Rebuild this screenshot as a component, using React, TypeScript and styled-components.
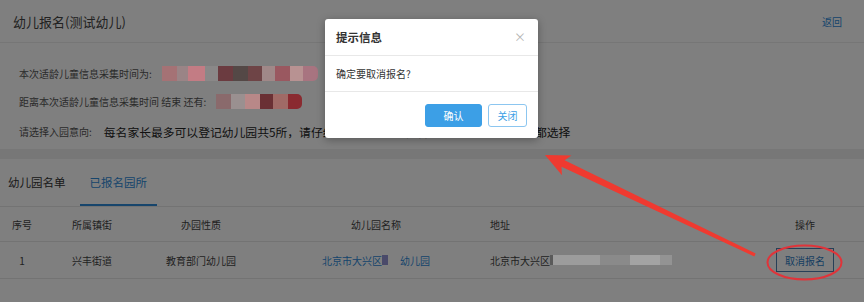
import React from "react";
import styled, { createGlobalStyle } from "styled-components";

const GlobalStyle = createGlobalStyle`
  html, body { margin: 0; padding: 0; background: #fff; }
  body { font-family: "Noto Sans CJK SC", "Noto Sans", sans-serif; color: #333; }
  * { box-sizing: border-box; }
`;

const Page = styled.div`
  position: relative;
  width: 864px;
  height: 302px;
  overflow: hidden;
  background: #fff;
`;

const Header = styled.div`
  height: 43px;
  padding: 0 22px 0 13px;
  display: flex;
  align-items: center;
  justify-content: space-between;
  border-bottom: 1px solid #ececec;
`;

const Title = styled.div`
  font-size: 13px;
  color: #444;
`;

const BackLink = styled.a`
  font-size: 10px;
  color: #2e8ad8;
  text-decoration: none;
`;

const Info = styled.div`
  padding: 22px 19px 8px;
  display: flex;
  flex-direction: column;
  gap: 12px;
`;

const InfoRow = styled.div<{ $tall?: boolean }>`
  height: ${(p) => (p.$tall ? 20 : 16)}px;
  display: flex;
  align-items: center;
  white-space: nowrap;
`;

const Label = styled.span`
  font-size: 10px;
  color: #555;
  margin-right: 10px;
`;

const BigText = styled.span`
  font-size: 11.8px;
  color: #222;
  margin-left: 2px;
`;

const Mosaic = styled.span`
  position: relative;
  z-index: 3;
  display: flex;
  height: 15px;
`;

const Tile = styled.span<{ $w: number; $c: string; $round?: boolean }>`
  width: ${(p) => p.$w}px;
  height: 100%;
  background: ${(p) => p.$c};
  border-radius: ${(p) => (p.$round ? "0 5px 5px 0" : "0")};
`;

const Band = styled.div`
  height: 10px;
  background: #efefef;
`;

const TabBar = styled.div`
  height: 48px;
  display: flex;
  border-bottom: 1px solid #e6e6e6;
`;

const Tab = styled.div<{ $active?: boolean; $first?: boolean }>`
  height: 100%;
  display: flex;
  align-items: center;
  padding: ${(p) => (p.$first ? "0 14px 0 8px" : "0 10px")};
  font-size: 11.5px;
  color: ${(p) => (p.$active ? "#2e8ad8" : "#333")};
  border-bottom: 2px solid ${(p) => (p.$active ? "#2e8ad8" : "transparent")};
`;

const TableRow = styled.div<{ $h: number }>`
  display: grid;
  grid-template-columns: 44px 96px 122px 228px 250px 124px;
  height: ${(p) => p.$h}px;
  align-items: center;
  border-bottom: 1px solid #e6e6e6;
  font-size: 10px;
  color: #444;
`;

const Cell = styled.div<{ $align?: "left" | "center"; $pl?: number }>`
  display: flex;
  align-items: center;
  justify-content: ${(p) => (p.$align === "left" ? "flex-start" : "center")};
  padding-left: ${(p) => p.$pl ?? 0}px;
  white-space: nowrap;
`;

const NameLink = styled.span`
  color: #2e8ad8;
  display: flex;
  align-items: center;
`;

const NameBlot = styled.span`
  position: relative;
  z-index: 3;
  width: 6px;
  height: 10px;
  background: #4a4a6a;
  margin-right: 12px;
`;

const AddrMosaic = styled.span`
  position: relative;
  z-index: 3;
  display: flex;
  height: 10px;
`;

const CancelBtn = styled.button`
  width: 58px;
  height: 24px;
  border: 1px solid #4f7fae;
  background: transparent;
  color: #2e7cc4;
  font-family: inherit;
  font-size: 10px;
  padding: 0;
`;

const Mask = styled.div`
  position: absolute;
  inset: 0;
  background: rgba(0, 0, 0, 0.5);
  z-index: 2;
`;

const Modal = styled.div`
  position: absolute;
  left: 325px;
  top: 19px;
  width: 213px;
  height: 119px;
  background: #fff;
  border-radius: 3px;
  z-index: 4;
  display: flex;
  flex-direction: column;
  box-shadow: 0 2px 8px rgba(0, 0, 0, 0.3);
`;

const ModalHead = styled.div`
  height: 37px;
  padding: 0 12px 0 11px;
  display: flex;
  align-items: center;
  justify-content: space-between;
  border-bottom: 1px solid #e8e8e8;
`;

const ModalTitle = styled.div`
  font-size: 11.5px;
  font-weight: 700;
  color: #333;
`;

const CloseX = styled.span`
  font-size: 12px;
  color: #b5b5b5;
  line-height: 1;
`;

const ModalBody = styled.div`
  height: 36px;
  padding: 0 11px;
  display: flex;
  align-items: center;
  border-bottom: 1px solid #e8e8e8;
  font-size: 10px;
  color: #333;
`;

const ModalFoot = styled.div`
  flex: 1;
  display: flex;
  align-items: center;
  justify-content: flex-end;
  gap: 6px;
  padding-right: 11px;
`;

const Btn = styled.button<{ $primary?: boolean; $w: number }>`
  width: ${(p) => p.$w}px;
  height: 23px;
  border-radius: 3px;
  font-family: inherit;
  font-size: 10px;
  padding: 0;
  border: 1px solid ${(p) => (p.$primary ? "#3c9fe6" : "#8cc6f0")};
  background: ${(p) => (p.$primary ? "#3c9fe6" : "#fff")};
  color: ${(p) => (p.$primary ? "#fff" : "#3c9fe6")};
`;

const Annotation = styled.svg`
  position: absolute;
  left: 0;
  top: 0;
  z-index: 5;
  pointer-events: none;
`;

const row1 = [
  [15, "#a57275"], [11, "#9a8486"], [17, "#c37c84"], [13, "#8a8888"],
  [15, "#6b3b40"], [15, "#544846"], [14, "#6e4446"], [13, "#a08888"],
  [15, "#9a5860"], [13, "#b89292"], [15, "#a87480"],
] as const;

const row2 = [
  [15, "#8a6a6c"], [14, "#9a9090"], [15, "#b88888"], [13, "#6a3034"],
  [15, "#a06a66"], [14, "#8a2a30"],
] as const;

const addr = [
  [3, "#5a5a5a"], [47, "#9c9c9c"], [30, "#8a8a8a"], [30, "#a3a3a3"], [12, "#939393"],
] as const;

function arrowPoints() {
  const tip = [545, 155];
  const tail = [755, 255];
  const dx = tail[0] - tip[0];
  const dy = tail[1] - tip[1];
  const len = Math.hypot(dx, dy);
  const u = [dx / len, dy / len];
  const n = [-u[1], u[0]];
  const hl = 24;
  const hw = 11;
  const base = [tip[0] + u[0] * hl, tip[1] + u[1] * hl];
  const notch = [tip[0] + u[0] * (hl - 4), tip[1] + u[1] * (hl - 4)];
  const p = (c: number[], k: number) => `${c[0] + n[0] * k},${c[1] + n[1] * k}`;
  return [
    `${tip[0]},${tip[1]}`,
    p(base, hw),
    p(notch, 3.6),
    p(tail, 1.6),
    p(tail, -1.6),
    p(notch, -3.6),
    p(base, -hw),
  ].join(" ");
}

export default function App() {
  return (
    <>
      <GlobalStyle />
      <Page>
        <Header>
          <Title>幼儿报名(测试幼儿)</Title>
          <BackLink>返回</BackLink>
        </Header>
        <Info>
          <InfoRow>
            <Label>本次适龄儿童信息采集时间为:</Label>
            <Mosaic>
              {row1.map(([w, c], i) => (
                <Tile key={i} $w={w} $c={c} $round={i === row1.length - 1} />
              ))}
            </Mosaic>
          </InfoRow>
          <InfoRow>
            <Label>距离本次适龄儿童信息采集时间 结束 还有:</Label>
            <Mosaic>
              {row2.map(([w, c], i) => (
                <Tile key={i} $w={w} $c={c} $round={i === row2.length - 1} />
              ))}
            </Mosaic>
          </InfoRow>
          <InfoRow $tall>
            <Label>请选择入园意向:</Label>
            <BigText>每名家长最多可以登记幼儿园共5所，请仔细阅读报名须知，各志愿可以不选也可以都选择</BigText>
          </InfoRow>
        </Info>
        <Band />
        <TabBar>
          <Tab $first>幼儿园名单</Tab>
          <Tab $active>已报名园所</Tab>
        </TabBar>
        <TableRow $h={35}>
          <Cell>序号</Cell>
          <Cell $align="left" $pl={28}>所属镇街</Cell>
          <Cell>办园性质</Cell>
          <Cell>幼儿园名称</Cell>
          <Cell $align="left">地址</Cell>
          <Cell $pl={6}>操作</Cell>
        </TableRow>
        <TableRow $h={37}>
          <Cell>1</Cell>
          <Cell $align="left" $pl={28}>兴丰街道</Cell>
          <Cell>教育部门幼儿园</Cell>
          <Cell>
            <NameLink>
              北京市大兴区
              <NameBlot />
              幼儿园
            </NameLink>
          </Cell>
          <Cell $align="left">
            北京市大兴区
            <AddrMosaic>
              {addr.map(([w, c], i) => (
                <Tile key={i} $w={w} $c={c} />
              ))}
            </AddrMosaic>
          </Cell>
          <Cell $pl={6}>
            <CancelBtn>取消报名</CancelBtn>
          </Cell>
        </TableRow>
        <Mask />
        <Modal>
          <ModalHead>
            <ModalTitle>提示信息</ModalTitle>
            <CloseX>×</CloseX>
          </ModalHead>
          <ModalBody>确定要取消报名?</ModalBody>
          <ModalFoot>
            <Btn $primary $w={57}>确认</Btn>
            <Btn $w={39}>关闭</Btn>
          </ModalFoot>
        </Modal>
        <Annotation width="864" height="302" viewBox="0 0 864 302">
          <polygon points={arrowPoints()} fill="#ef3a30" />
          <ellipse cx="804.5" cy="262.5" rx="37" ry="17" fill="none" stroke="#e0343a" strokeWidth="2" />
        </Annotation>
      </Page>
    </>
  );
}
